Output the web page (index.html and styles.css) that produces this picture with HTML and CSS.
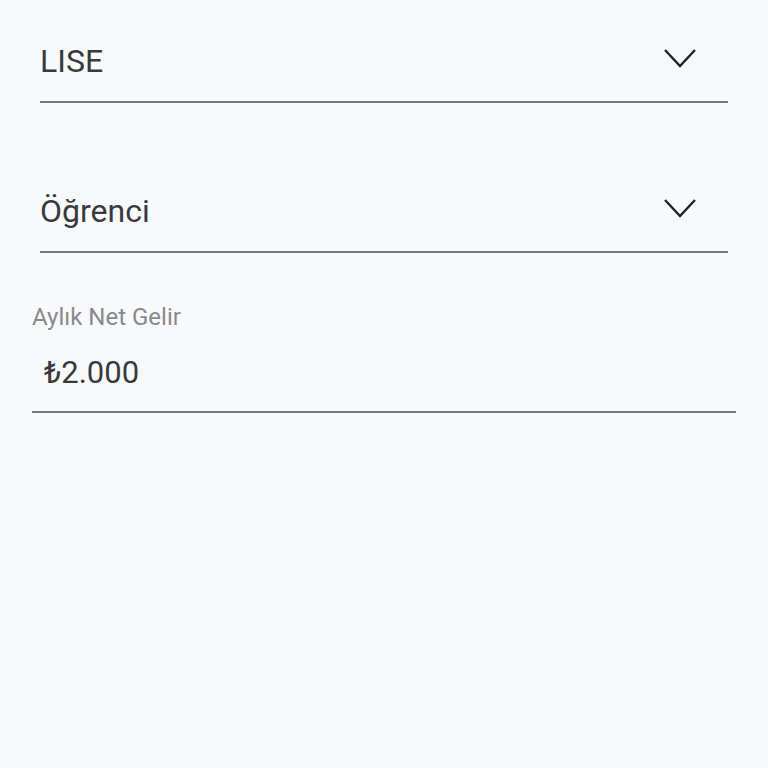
FILE: index.html
```html
<!DOCTYPE html>
<html>
	<head>
		<meta charset='utf-8'>
		<meta name='viewport' content='width=device-width, initial-scale=1'>
		<title>Gelir Bilgileri</title>
		<link rel="stylesheet" href="styles.css">
	</head>
	<body>
		<main class='form'>
			<div class='select'>
				<span class='select-value'>LISE</span>
				<svg class='chevron' width='32' height='19' viewBox='0 0 32 19'><path d='M1 1 L16 17 L31 1' fill='none' stroke='#222' stroke-width='2.4'/></svg>
			</div>
			<div class='select'>
				<span class='select-value'>Öğrenci</span>
				<svg class='chevron' width='32' height='19' viewBox='0 0 32 19'><path d='M1 1 L16 17 L31 1' fill='none' stroke='#222' stroke-width='2.4'/></svg>
			</div>
			<div class='field'>
				<label for='income'>Aylık Net Gelir</label>
				<div id='income' class='field-value'>₺2.000</div>
			</div>
		</main>
	</body>
</html>
```
FILE: styles.css
```css
:root {
	--bg: rgb(248, 249, 251);
	--text: rgb(58, 58, 60);
	--label: rgb(138, 138, 140);
	--line: rgb(120, 120, 122);
}
html {
	background-color: var(--bg);
	color: var(--text);
	font-family: Roboto, "Noto Sans", sans-serif;
}
body {
	margin: 0;
	padding: 0;
}
.form {
	padding: 41px 32px 0 32px;
}
.select {
	display: flex;
	justify-content: space-between;
	align-items: flex-start;
	margin: 0 8px;
	padding-bottom: 20px;
	border-bottom: 2px solid var(--line);
}
.select + .select {
	margin-top: 88px;
}
.select-value {
	font-size: 32px;
	line-height: 40px;
}
.chevron {
	margin: 8px 32px 0 0;
}
.field {
	margin-top: 50px;
	padding-bottom: 18px;
	border-bottom: 2px solid var(--line);
}
.field label {
	display: block;
	font-size: 24px;
	line-height: 28px;
	color: var(--label);
}
.field-value {
	margin-top: 22px;
	padding-left: 12px;
	font-size: 31px;
	line-height: 40px;
}
```
